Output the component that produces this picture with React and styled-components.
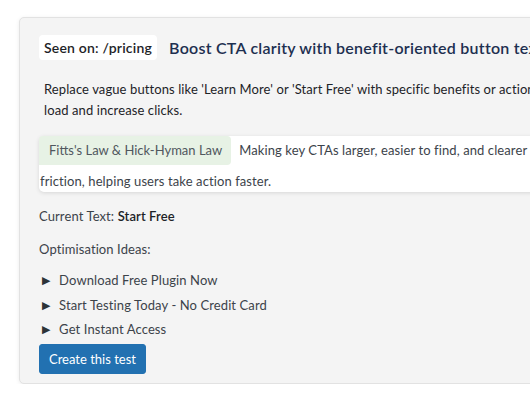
import React from "react";
import styled, { createGlobalStyle } from "styled-components";

const Global = createGlobalStyle`
  html, body { margin: 0; padding: 0; background: #ffffff; overflow: hidden; }
  body {
    font-family: "Lato", "Liberation Sans", sans-serif;
    font-size: 13px;
    letter-spacing: 0.1px;
    color: #3c434a;
  }
`;

const Page = styled.div`
  padding: 17px 0 0 19px;
  width: 900px;
`;

const Card = styled.div`
  width: 760px;
  background: #f4f4f4;
  border: 1px solid #e2e2e2;
  border-radius: 5px;
  box-shadow: 0 1px 4px rgba(0, 0, 0, 0.08);
  padding: 17px 20px 9px 19px;
`;

const Header = styled.div`
  display: flex;
  align-items: center;
  gap: 12px;
`;

const Badge = styled.span`
  background: #ffffff;
  border-radius: 4px;
  padding: 0 5px;
  height: 25px;
  display: inline-flex;
  align-items: center;
  font-size: 14px;
  font-weight: 600;
  letter-spacing: 0.2px;
  color: #1d2327;
`;

const Title = styled.h2`
  margin: 0;
  font-size: 16px;
  font-weight: 600;
  letter-spacing: 0.25px;
  color: #1d2f50;
  white-space: nowrap;
`;

const Description = styled.p`
  margin: 19px 0 15px;
  padding: 0 5px;
  line-height: 21px;
  color: #1d2327;
`;

const Principle = styled.div`
  background: #ffffff;
  border-radius: 5px;
  box-shadow: 0 1px 4px rgba(0, 0, 0, 0.12);
  line-height: 22px;
  padding-left: 1px;
  color: #3c434a;
`;

const Law = styled.span`
  display: inline-block;
  background: #e7f2e5;
  border-radius: 4px 4px 4px 0;
  padding: 6px 9px 6px 10px;
  line-height: 17px;
  letter-spacing: 0;
  margin: 0 8px 5px -1px;
  color: #50575e;
`;

const Line = styled.div`
  margin-top: ${(p) => p.$top}px;
  line-height: 21px;
  color: #3c434a;
`;

const Strong = styled.span`
  font-weight: 600;
  color: #1d2327;
`;

const Ideas = styled.ul`
  list-style: none;
  margin: 8px 0 0;
  padding: 0 0 0 3px;
`;

const Idea = styled.li`
  display: flex;
  align-items: center;
  gap: 9px;
  height: 24.5px;
  color: #3c434a;
  &::before {
    content: "▶";
    font-size: 11px;
    color: #2c3338;
  }
`;

const Button = styled.button`
  margin-top: 2px;
  height: 30px;
  padding: 0 9px;
  background: #2271b1;
  border: 1px solid #2271b1;
  border-radius: 3px;
  color: #ffffff;
  font-family: inherit;
  font-size: 13px;
  letter-spacing: 0;
  cursor: pointer;
`;

export default function App() {
  return (
    <>
      <Global />
      <Page>
        <Card>
          <Header>
            <Badge>Seen on: /pricing</Badge>
            <Title>Boost CTA clarity with benefit-oriented button text</Title>
          </Header>
          <Description>
            Replace vague buttons like 'Learn More' or 'Start Free' with specific benefits or action-driven copy to reduce cognitive
            <br />
            load and increase clicks.
          </Description>
          <Principle>
            <Law>Fitts's Law &amp; Hick-Hyman Law</Law>
            Making key CTAs larger, easier to find, and clearer in intent reduces decision
            <br />
            friction, helping users take action faster.
          </Principle>
          <Line $top={14}>
            Current Text: <Strong>Start Free</Strong>
          </Line>
          <Line $top={12}>Optimisation Ideas:</Line>
          <Ideas>
            <Idea>Download Free Plugin Now</Idea>
            <Idea>Start Testing Today - No Credit Card</Idea>
            <Idea>Get Instant Access</Idea>
          </Ideas>
          <Button>Create this test</Button>
        </Card>
      </Page>
    </>
  );
}
